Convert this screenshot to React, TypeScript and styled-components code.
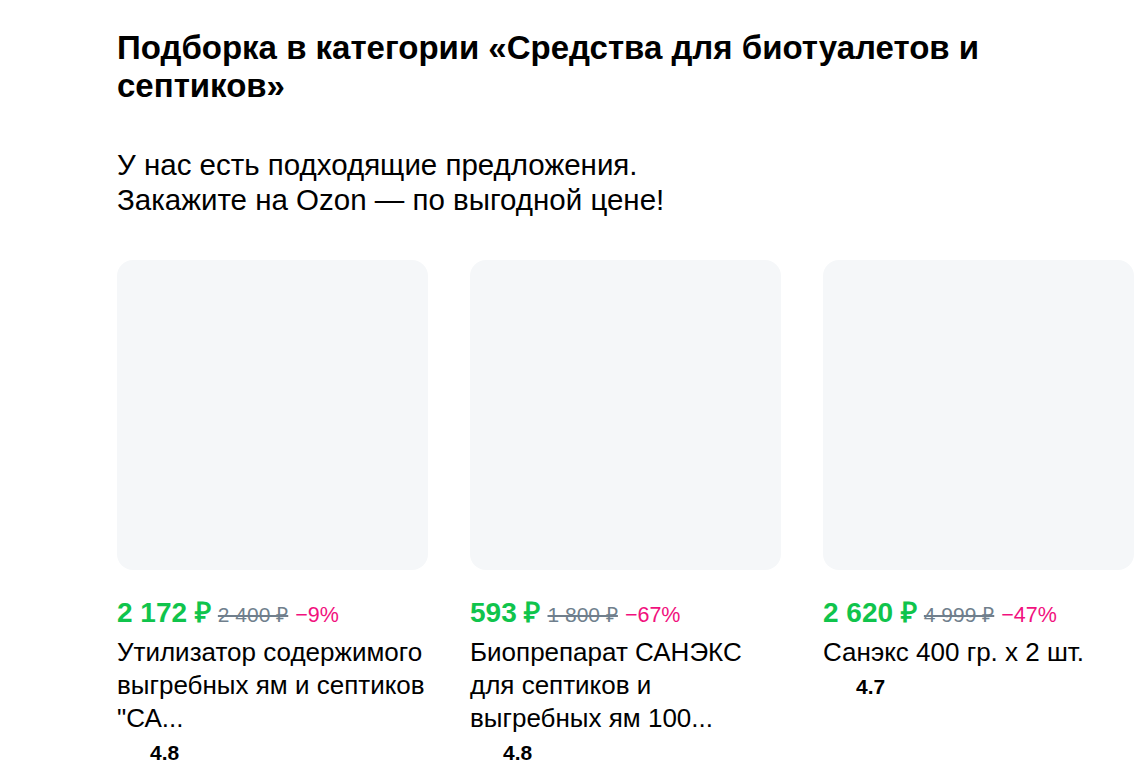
import styled, { createGlobalStyle } from 'styled-components';

const GlobalStyle = createGlobalStyle`
  html, body {
    margin: 0;
    padding: 0;
    background: #ffffff;
  }
  body {
    font-family: 'Liberation Sans', Arial, sans-serif;
    color: #000000;
  }
`;

type Product = {
  price: string;
  oldPrice: string;
  discount: string;
  name: string;
  rating: string;
};

const PRODUCTS: Product[] = [
  {
    price: '2 172 ₽',
    oldPrice: '2 400 ₽',
    discount: '−9%',
    name: 'Утилизатор содержимого выгребных ям и септиков "СА...',
    rating: '4.8',
  },
  {
    price: '593 ₽',
    oldPrice: '1 800 ₽',
    discount: '−67%',
    name: 'Биопрепарат САНЭКС для септиков и выгребных ям 100...',
    rating: '4.8',
  },
  {
    price: '2 620 ₽',
    oldPrice: '4 999 ₽',
    discount: '−47%',
    name: 'Санэкс 400 гр. х 2 шт.',
    rating: '4.7',
  },
];

const ProductCard = ({ product }: { product: Product }) => (
  <Card>
    <ImageBox />
    <PriceRow>
      <Price>{product.price}</Price>
      <OldPrice>{product.oldPrice}</OldPrice>
      <Discount>{product.discount}</Discount>
    </PriceRow>
    <Name>{product.name}</Name>
    <Rating>
      <RatingIcon />
      {product.rating}
    </Rating>
  </Card>
);

export default function App() {
  return (
    <>
      <GlobalStyle />
      <Page>
        <Header>
          <Title>Подборка в категории «Средства для биотуалетов и септиков»</Title>
          <Subtitle>
            У нас есть подходящие предложения.
            <br />
            Закажите на Ozon — по выгодной цене!
          </Subtitle>
        </Header>
        <Cards>
          {PRODUCTS.map((p, i) => (
            <ProductCard key={`product-${i}`} product={p} />
          ))}
        </Cards>
      </Page>
    </>
  );
}

const Page = styled.div`
  display: flex;
  flex-flow: column nowrap;
  padding: 29px 0 0 117px;
  overflow: hidden;
`;

const Header = styled.div`
  display: flex;
  flex-flow: column nowrap;
  gap: 42px;
  padding-right: 117px;
`;

const Title = styled.h2`
  margin: 0;
  font-size: 33px;
  line-height: 38px;
  font-weight: bold;
`;

const Subtitle = styled.p`
  margin: 0;
  font-size: 29.5px;
  line-height: 35px;
  font-weight: normal;
`;

const Cards = styled.div`
  display: flex;
  flex-flow: row nowrap;
  gap: 42px;
  margin-top: 43px;
`;

const Card = styled.div`
  display: flex;
  flex-flow: column nowrap;
  flex: 0 0 311px;
  width: 311px;
`;

const ImageBox = styled.div`
  width: 311px;
  height: 310px;
  border-radius: 16px;
  background-color: #f5f7f9;
`;

const PriceRow = styled.div`
  display: flex;
  flex-flow: row nowrap;
  align-items: baseline;
  gap: 7px;
  margin-top: 28px;
  line-height: 30px;
`;

const Price = styled.span`
  font-size: 28px;
  font-weight: bold;
  color: #10c44c;
`;

const OldPrice = styled.span`
  font-size: 21px;
  color: #707f8d;
  text-decoration: line-through;
`;

const Discount = styled.span`
  font-size: 21.5px;
  color: #f1117e;
`;

const Name = styled.div`
  margin-top: 6px;
  font-size: 26px;
  line-height: 33px;
`;

const Rating = styled.div`
  display: flex;
  flex-flow: row nowrap;
  align-items: center;
  margin-top: 6px;
  font-size: 21px;
  line-height: 24px;
  font-weight: bold;
`;

const RatingIcon = styled.span`
  display: inline-block;
  width: 24px;
  height: 16px;
  margin-right: 9px;
`;
